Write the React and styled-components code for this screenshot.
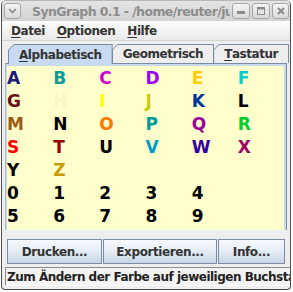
import React from 'react';
import styled, { createGlobalStyle } from 'styled-components';

const Global = createGlobalStyle`
  html, body { margin: 0; padding: 0; background: #ffffff; }
  body {
    width: 293px; height: 292px; overflow: hidden;
    font-family: "DejaVu Sans", "Liberation Sans", sans-serif;
  }
`;

const Frame = styled.div`
  box-sizing: border-box;
  margin-left: 1px;
  width: 290px;
  height: 290px;
  border: 1px solid #4d4d4d;
  border-top-color: #b8b8b8;
  border-radius: 5px 5px 4px 4px;
  background: #eeeeee;
  display: flex;
  flex-direction: column;
  overflow: hidden;
`;

const TitleBar = styled.div`
  height: 20px;
  flex: none;
  display: flex;
  align-items: center;
  padding: 0 1px 0 2px;
  background: linear-gradient(#e4e4e4, #d3d3d3);
`;

const WinButton = styled.div`
  box-sizing: border-box;
  width: ${p => p.$w || 18}px;
  height: 16px;
  margin-left: ${p => p.$ml || 0}px;
  border: 1px solid #a6a6a6;
  border-radius: 3px;
  background: linear-gradient(#f4f4f4, #dadada);
  display: flex;
  align-items: center;
  justify-content: center;
  flex: none;
`;

const TitleText = styled.div`
  flex: 1;
  margin-left: 11px;
  overflow: hidden;
  white-space: nowrap;
  color: #8c8c8c;
  font-weight: bold;
  font-size: 12.5px;
  letter-spacing: -0.6px;
`;

const MenuBar = styled.div`
  height: 19px;
  flex: none;
  display: flex;
  align-items: center;
  padding-left: 3px;
  background: linear-gradient(#fdfdfd, #e9e9e9);
  border-bottom: 1px solid #d2d2d2;
`;

const MenuItem = styled.div`
  padding: 0 6px;
  font-size: 12px;
  font-weight: bold;
  color: #333333;
  letter-spacing: -0.45px;
  u { text-decoration: underline; text-underline-offset: 2px; }
`;

const Body = styled.div`
  flex: 1;
  display: flex;
  flex-direction: column;
  padding: 3px 3px 3px 3px;
`;

const TabRow = styled.div`
  display: flex;
  align-items: flex-end;
  padding-left: 3px;
  height: 19px;
`;

const Tab = styled.div`
  position: relative;
  z-index: ${p => (p.$active ? 2 : 1)};
  height: ${p => (p.$active ? 20 : 19)}px;
  margin-bottom: ${p => (p.$active ? -1 : 0)}px;
  margin-left: ${p => (p.$first ? 0 : -1)}px;
  box-sizing: border-box;
  padding: 1px 1px 0 1px;
  background: #7b8aa6;
  clip-path: polygon(6px 0, 100% 0, 100% 100%, 0 100%, 0 6px);
`;

const TabFace = styled.div`
  height: 100%;
  box-sizing: border-box;
  padding: 0 ${p => p.$pad}px;
  display: flex;
  align-items: center;
  background: ${p => (p.$active ? '#c8daf0' : '#eeeeee')};
  clip-path: polygon(5px 0, 100% 0, 100% 100%, 0 100%, 0 5px);
  font-size: 12px;
  font-weight: bold;
  color: #333333;
  letter-spacing: -0.45px;
  u { text-decoration: underline; text-underline-offset: 2px; }
`;

const Panel = styled.div`
  border-top: 1px solid #7b8aa6;
  border-left: 1px solid #a9b7cb;
  border-right: 1px solid #7b8aa6;
  padding: 2px 2px 0 1px;
  background: #c8daf0;
`;

const LetterGrid = styled.div`
  background: #ffffcc;
  padding: 1px 0 2px 0;
  display: grid;
  grid-template-columns: repeat(6, 1fr);
  grid-auto-rows: 23px;
`;

const Glyph = styled.div`
  font-size: 17px;
  line-height: 23px;
  font-weight: bold;
  color: ${p => p.$c};
`;

const ButtonRow = styled.div`
  margin-top: 9px;
  padding: 0 2px;
  display: grid;
  grid-template-columns: 95px 114px 1fr;
  gap: 1px;
`;

const PushButton = styled.div`
  box-sizing: border-box;
  height: 25px;
  border: 1px solid #7b8aa6;
  background: linear-gradient(#f6f9fd 0%, #e6eef7 45%, #c7d6e7 100%);
  display: flex;
  align-items: center;
  justify-content: center;
  font-size: 12px;
  font-weight: bold;
  color: #333333;
  letter-spacing: -0.4px;
`;

const StatusBar = styled.div`
  margin-top: 3px;
  margin-right: -3px;
  box-sizing: border-box;
  height: 19px;
  border-top: 1px solid #8a8a8a;
  border-left: 1px solid #8a8a8a;
  border-bottom: 1px solid #ffffff;
  background: #f4f4f4;
  padding-left: 1px;
  display: flex;
  align-items: center;
  overflow: hidden;
  white-space: nowrap;
  font-size: 12px;
  font-weight: bold;
  color: #222222;
  letter-spacing: -0.5px;
`;

const rows = [
  [['A', '#1b1b78'], ['B', '#0e9898'], ['C', '#cc00cc'], ['D', '#9b00f5'], ['E', '#ffcc00'], ['F', '#00cccc']],
  [['G', '#681010'], ['H', '#f9f6c2'], ['I', '#ffff00'], ['J', '#cccc00'], ['K', '#003399'], ['L', '#000000']],
  [['M', '#9a5c12'], ['N', '#000000'], ['O', '#ff7700'], ['P', '#009999'], ['Q', '#990099'], ['R', '#00cc33']],
  [['S', '#ff0000'], ['T', '#990000'], ['U', '#000000'], ['V', '#0099cc'], ['W', '#330099'], ['X', '#990066']],
  [['Y', '#000000'], ['Z', '#cc9900']],
  [['0', '#000'], ['1', '#000'], ['2', '#000'], ['3', '#000'], ['4', '#000']],
  [['5', '#000'], ['6', '#000'], ['7', '#000'], ['8', '#000'], ['9', '#000']],
];

function RowCells({ row }) {
  const cells = [];
  for (let i = 0; i < 6; i++) {
    const item = row[i];
    cells.push(item ? <Glyph key={i} $c={item[1]}>{item[0]}</Glyph> : <div key={i} />);
  }
  return cells;
}

export default function App() {
  return (
    <>
      <Global />
      <Frame>
        <TitleBar>
          <WinButton $w={17}>
            <svg width="9" height="6" viewBox="0 0 9 6">
              <path d="M1 1 L4.5 4.5 L8 1" fill="none" stroke="#8a8a8a" strokeWidth="1.6" />
            </svg>
          </WinButton>
          <TitleText>SynGraph 0.1 - /home/reuter/ju</TitleText>
          <WinButton $ml={2}>
            <svg width="10" height="10" viewBox="0 0 10 10">
              <rect x="1" y="5" width="8" height="3" fill="#8a8a8a" />
            </svg>
          </WinButton>
          <WinButton $ml={2}>
            <svg width="10" height="10" viewBox="0 0 10 10">
              <rect x="1.5" y="1.5" width="7" height="7" fill="none" stroke="#8a8a8a" strokeWidth="1" />
              <rect x="1" y="1" width="8" height="2.5" fill="#8a8a8a" />
            </svg>
          </WinButton>
          <WinButton $ml={2} $w={17}>
            <svg width="10" height="10" viewBox="0 0 10 10">
              <path d="M2 2 L8 8 M8 2 L2 8" stroke="#8a8a8a" strokeWidth="2" />
            </svg>
          </WinButton>
        </TitleBar>
        <MenuBar>
          <MenuItem><u>D</u>atei</MenuItem>
          <MenuItem><u>O</u>ptionen</MenuItem>
          <MenuItem><u>H</u>ilfe</MenuItem>
        </MenuBar>
        <Body>
          <TabRow>
            <Tab $active $first>
              <TabFace $active $pad={10}><u>A</u>lphabetisch</TabFace>
            </Tab>
            <Tab>
              <TabFace $pad={10}>Geometrisch</TabFace>
            </Tab>
            <Tab>
              <TabFace $pad={10}><u>T</u>astatur</TabFace>
            </Tab>
          </TabRow>
          <Panel>
            <LetterGrid>
              {rows.map((r, i) => (
                <RowCells key={i} row={r} />
              ))}
            </LetterGrid>
          </Panel>
          <ButtonRow>
            <PushButton>Drucken...</PushButton>
            <PushButton>Exportieren...</PushButton>
            <PushButton>Info...</PushButton>
          </ButtonRow>
          <StatusBar>Zum Ändern der Farbe auf jeweiligen Buchstaben klicken</StatusBar>
        </Body>
      </Frame>
    </>
  );
}
